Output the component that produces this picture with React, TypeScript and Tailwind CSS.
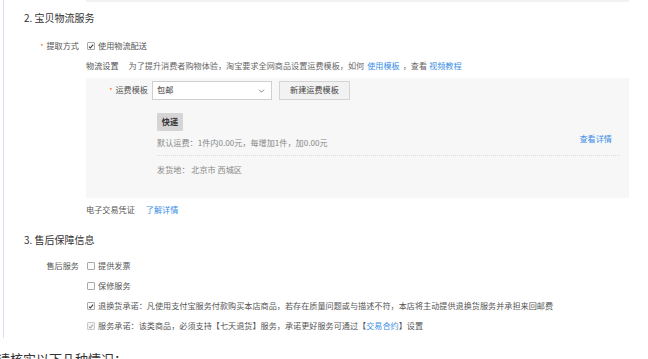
import React from "react";

const font = {
  fontFamily: '"Noto Sans CJK SC", "Liberation Sans", sans-serif',
};

function Box({ checked, disabled }: { checked?: boolean; disabled?: boolean }) {
  return (
    <span
      className={`inline-flex h-[8px] w-[8px] items-center justify-center rounded-[1px] border ${
        disabled ? "border-[#c8c8c8] bg-[#f4f4f4]" : "border-[#a9a9a9] bg-[#fbfbfb]"
      }`}
    >
      {checked && (
        <svg viewBox="0 0 8 8" className="h-[7px] w-[7px]">
          <path
            d="M1.3 4.2 L3.1 6 L6.8 1.6"
            fill="none"
            stroke={disabled ? "#a8a8a8" : "#333"}
            strokeWidth="1.4"
          />
        </svg>
      )}
    </span>
  );
}

function Check({
  checked,
  disabled,
  children,
}: {
  checked?: boolean;
  disabled?: boolean;
  children: React.ReactNode;
}) {
  return (
    <div className="flex h-[20px] items-center gap-[3px] pl-[1px]">
      <Box checked={checked} disabled={disabled} />
      <span className="text-[#555]">{children}</span>
    </div>
  );
}

function Label({ children, required }: { children: React.ReactNode; required?: boolean }) {
  return (
    <div className="flex w-[75px] items-center justify-end gap-[3px] text-[#555]">
      {required && <span className="text-[7px] text-[#f60]">*</span>}
      <span>{children}</span>
    </div>
  );
}

export default function App() {
  return (
    <div className="h-[359px] w-[648px] overflow-hidden bg-white text-[8.15px] leading-none" style={font}>
      <div className="ml-[3px] h-[338px] border-l border-[#d7e2ee]">
        <div className="ml-[82px] h-[2px] w-[543px] bg-[#f1f1f1]" />

        <div className="mt-[6px] flex h-[20px] items-center pl-[20px] text-[10px] text-[#333]">
          2. 宝贝物流服务
        </div>

        <div className="mt-[8px] flex h-[20px] items-center">
          <Label required>提取方式</Label>
          <div className="ml-[7px]">
            <Check checked>使用物流配送</Check>
          </div>
        </div>

        <div className="ml-[82px] flex h-[20px] items-center text-[#666]">
          <span className="text-[#555]">物流设置</span>
          <span className="ml-[10px]">为了提升消费者购物体验，淘宝要求全网商品设置运费模板，如何</span>
          <span className="ml-[3px] text-[#3a8ee6]">使用模板</span>
          <span className="ml-[3px]">，查看</span>
          <span className="ml-[2px] text-[#3a8ee6]">视频教程</span>
        </div>

        <div className="ml-[82px] mt-[2px] h-[120px] w-[543px] bg-[#f7f7f7] pt-[3px]">
          <div className="flex h-[19px] items-center">
            <div className="flex w-[62px] items-center justify-end gap-[3px] text-[#555]">
              <span className="text-[7px] text-[#f60]">*</span>
              <span>运费模板</span>
            </div>
            <div className="ml-[4px] flex h-[19px] w-[120px] items-center justify-between border border-[#cfcfcf] bg-white pl-[4px] pr-[6px] text-[#333]">
              <span>包邮</span>
              <svg viewBox="0 0 8 5" className="h-[4px] w-[7px]">
                <path d="M0.8 0.8 L4 4 L7.2 0.8" fill="none" stroke="#666" strokeWidth="1" />
              </svg>
            </div>
            <div className="ml-[7px] flex h-[19px] w-[71px] items-center justify-center border border-[#d4d4d4] bg-[#f2f2f2] text-[#444]">
              新建运费模板
            </div>
          </div>

          <div className="ml-[71px] mr-[9px] mt-[13px]">
            <div className="flex h-[18px] w-[26px] items-center justify-center rounded-[1px] bg-[#d5d5d5] font-bold text-[#333]">
              快递
            </div>
            <div className="mt-[2px] flex items-start justify-between">
              <span className="h-[20px] leading-[20px] text-[#888]">
                默认运费：1件内0.00元，每增加1件，加0.00元
              </span>
              <span className="mr-[8px] leading-[12px] text-[#3a8ee6]">查看详情</span>
            </div>
            <div className="mt-[2px] border-b border-dotted border-[#dcdcdc]" />
            <div className="mt-[4px] flex h-[20px] items-center text-[#888]">
              发货地： 北京市 西城区
            </div>
          </div>
        </div>

        <div className="ml-[82px] mt-[2px] flex h-[20px] items-center">
          <span className="text-[#555]">电子交易凭证</span>
          <span className="ml-[11px] text-[#3a8ee6]">了解详情</span>
        </div>

        <div className="mt-[10px] flex h-[20px] items-center pl-[20px] text-[10px] text-[#333]">
          3. 售后保障信息
        </div>

        <div className="mt-[6px] flex">
          <div className="flex h-[20px] items-center">
            <Label>售后服务</Label>
          </div>
          <div className="ml-[7px] flex flex-col">
            <Check>提供发票</Check>
            <Check>保修服务</Check>
            <Check checked>
              退换货承诺：凡使用支付宝服务付款购买本店商品，若存在质量问题或与描述不符，本店将主动提供退换货服务并承担来回邮费
            </Check>
            <Check checked disabled>
              服务承诺：该类商品，必须支持【七天退货】服务，承诺更好服务可通过【
              <span className="text-[#3a8ee6]">交易合约</span>】设置
            </Check>
          </div>
        </div>
      </div>

      <div className="-ml-[3px] mt-[12px] whitespace-nowrap text-[13px] leading-[18px] text-[#333]">
        请核实以下几种情况：
      </div>
    </div>
  );
}
